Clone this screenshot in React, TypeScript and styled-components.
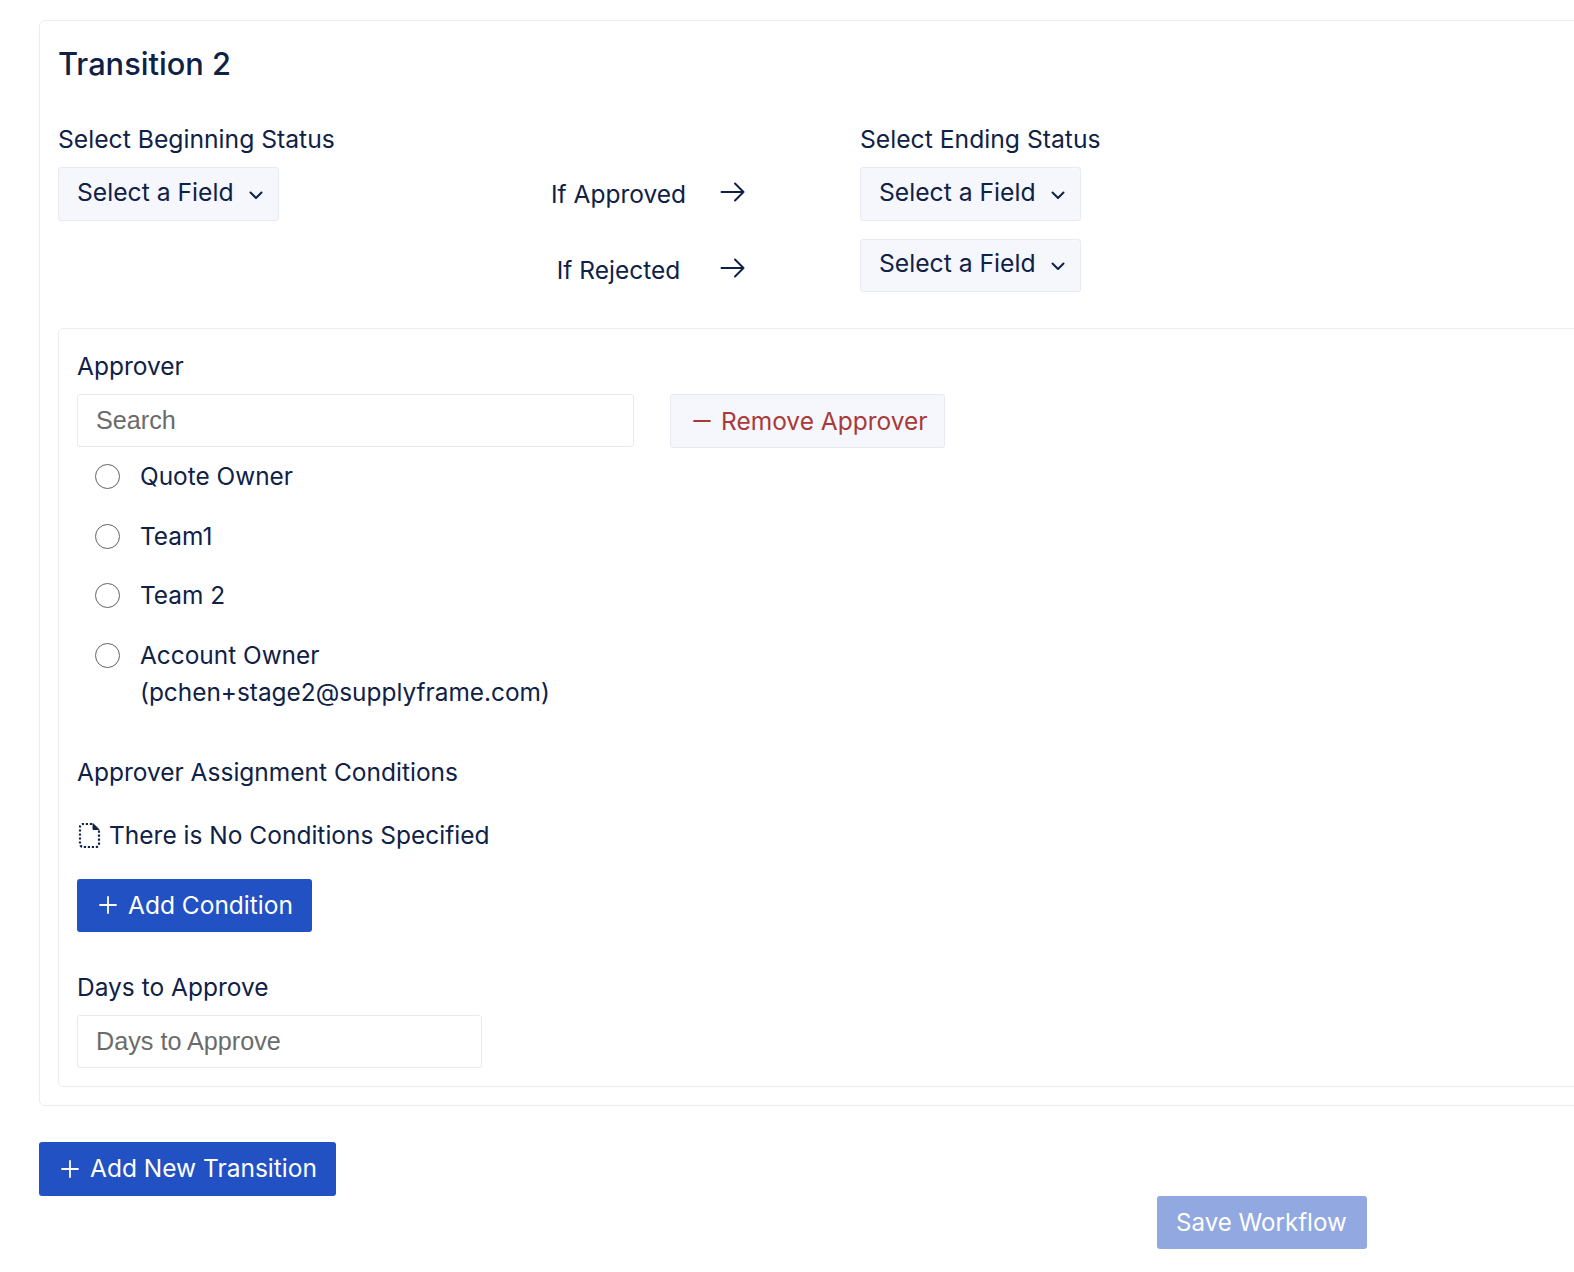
import React from "react";
import styled, { createGlobalStyle } from "styled-components";

const Global = createGlobalStyle`
  html, body { margin: 0; padding: 0; background: #fff; overflow: hidden; }
  body { font-family: Inter, "Liberation Sans", sans-serif; color: #0f2147; font-size: 24.5px; line-height: 37px; }
  * { box-sizing: border-box; }
`;

const Page = styled.div`
  width: 1574px;
  height: 1272px;
  padding: 20px 0 0 39px;
  overflow: hidden;
`;
const Card = styled.section`
  width: 1620px;
  border: 1px solid #ebecf0;
  border-radius: 6px;
  padding: 18px;
  background: #fff;
`;
const Title = styled.h2`
  margin: 0;
  font-size: 30.8px;
  line-height: 49px;
  font-weight: 500;
`;
const StatusRow = styled.div`
  display: flex;
  margin-top: 33px;
`;
const BeginColumn = styled.div`
  width: 490px;
`;
const MiddleColumn = styled.div`
  display: flex;
  flex-direction: column;
  gap: 27px;
  width: 312px;
  padding-top: 46px;
`;
const OutcomeRow = styled.div<{ $height: number }>`
  display: flex;
  align-items: center;
  height: ${(p) => p.$height}px;
`;
const OutcomeLabel = styled.span`
  width: 141px;
  text-align: center;
  margin-right: 31px;
  white-space: nowrap;
`;
const EndColumn = styled.div`
  display: flex;
  flex-direction: column;
  align-items: flex-start;
  gap: 18px;
`;
const FieldLabel = styled.label`
  display: block;
  height: 46px;
  white-space: nowrap;
`;
const StatusLabel = styled(FieldLabel)`
  font-size: 24.7px;
`;
const ApproverLabel = styled(FieldLabel)`
  padding-top: 1px;
`;
const SelectButton = styled.button`
  display: flex;
  align-items: center;
  justify-content: space-between;
  width: 221px;
  height: 53.5px;
  padding: 0 14px 3px 18px;
  background: #f5f7fc;
  border: 1px solid #e8eaf0;
  border-radius: 3px;
  font: inherit;
  font-size: 24.7px;
  color: inherit;
`;
const Panel = styled.div`
  margin-top: 36px;
  border: 1px solid #ebecf0;
  border-radius: 5px;
  padding: 18px;
`;
const ApproverRow = styled.div`
  display: flex;
  align-items: flex-start;
  gap: 36px;
  margin-top: 1px;
`;
const TextInput = styled.input<{ $width: number }>`
  display: block;
  width: ${(p) => p.$width}px;
  height: 53px;
  padding: 0 18px;
  border: 1px solid #e8eaf0;
  border-radius: 3px;
  font-family: "Liberation Sans", Arial, sans-serif;
  font-size: 25.2px;
  color: inherit;
  background: #fff;
  &::placeholder { color: #6b6b6b; opacity: 1; }
`;
const RemoveButton = styled.button`
  display: flex;
  align-items: center;
  gap: 9px;
  width: 275px;
  height: 54px;
  padding: 0 0 0 21px;
  background: #f5f7fc;
  border: 1px solid #e8eaf0;
  border-radius: 3px;
  font: inherit;
  font-size: 24.5px;
  color: #a83a3a;
  white-space: nowrap;
`;
const RadioList = styled.div`
  display: flex;
  flex-direction: column;
  gap: 22.5px;
  padding: 10px 0 0 18px;
  width: 500px;
  font-size: 24.4px;
`;
const RadioRow = styled.label`
  display: flex;
  gap: 20px;
  align-items: flex-start;
`;
const RadioMark = styled.span`
  flex: none;
  width: 25px;
  height: 25px;
  margin-top: 6px;
  border-radius: 50%;
  border: 1px solid #5f6368;
  background: #fff;
`;
const SectionLabel = styled.div`
  margin-top: 43px;
`;
const EmptyNote = styled.div`
  display: flex;
  align-items: center;
  gap: 8px;
  margin-top: 26px;
`;
const PrimaryButton = styled.button<{ $height: number }>`
  display: flex;
  align-items: center;
  gap: 10px;
  height: ${(p) => p.$height}px;
  padding: 0 19px 0 21px;
  border: none;
  border-radius: 3px;
  font: inherit;
  color: #fff;
  white-space: nowrap;
  background: #2251c4;
`;
const SaveButton = styled(PrimaryButton)`
  padding: 0 20px 0 19px;
  font-size: 24.1px;
  background: #91a8e1;
`;
const ConditionAction = styled.div`
  margin-top: 25px;
  margin-bottom: 37px;
`;
const FooterTop = styled.div`
  margin-top: 36px;
`;
const FooterSave = styled.div`
  margin-left: 1118px;
`;
const ArrowIcon = styled.svg`
  margin-bottom: 4px;
`;
const ChevronIcon = styled.svg`
  margin-top: 5px;
`;
const DocIcon = styled.svg`
  margin-left: 1px;
`;

const Chevron = () => (
  <ChevronIcon width="16" height="16" viewBox="0 0 16 16" fill="none" stroke="currentColor" strokeWidth="2" strokeLinecap="round" strokeLinejoin="round">
    <path d="M2.5 5.5 8 11l5.5-5.5" />
  </ChevronIcon>
);
const Arrow = () => (
  <ArrowIcon width="26" height="22" viewBox="0 0 26 22" fill="none" stroke="currentColor" strokeWidth="2" strokeLinecap="round" strokeLinejoin="round">
    <path d="M1.5 11h22M15 2.5l8.5 8.5-8.5 8.5" />
  </ArrowIcon>
);
const Plus = () => (
  <svg width="20" height="20" viewBox="0 0 20 20" fill="none" stroke="currentColor" strokeWidth="1.8" strokeLinecap="round">
    <path d="M10 2v16M2 10h16" />
  </svg>
);
const Minus = () => (
  <svg width="20" height="20" viewBox="0 0 20 20" fill="none" stroke="currentColor" strokeWidth="1.8" strokeLinecap="round">
    <path d="M2 10h16" />
  </svg>
);
const DashedDoc = () => (
  <DocIcon width="23" height="26" viewBox="0 0 23 26" fill="none" stroke="currentColor" strokeWidth="2.2">
    <path d="M14 2H5a3 3 0 0 0-3 3v17a3 3 0 0 0 3 3h13a3 3 0 0 0 3-3V8" strokeDasharray="2.2 1.8" />
    <path d="M15 1.5v6h6z" fill="currentColor" strokeWidth="1" />
  </DocIcon>
);

const approvers = ["Quote Owner", "Team1", "Team 2", "Account Owner (pchen+stage2@supplyframe.com)"];

export default function App() {
  return (
    <Page>
      <Global />
      <Card>
        <Title>Transition 2</Title>
        <StatusRow>
          <BeginColumn>
            <StatusLabel>Select Beginning Status</StatusLabel>
            <SelectButton>Select a Field<Chevron /></SelectButton>
          </BeginColumn>
          <MiddleColumn>
            <OutcomeRow $height={54}>
              <OutcomeLabel>If Approved</OutcomeLabel>
              <Arrow />
            </OutcomeRow>
            <OutcomeRow $height={44}>
              <OutcomeLabel>If Rejected</OutcomeLabel>
              <Arrow />
            </OutcomeRow>
          </MiddleColumn>
          <EndColumn>
            <div>
              <StatusLabel>Select Ending Status</StatusLabel>
              <SelectButton>Select a Field<Chevron /></SelectButton>
            </div>
            <SelectButton>Select a Field<Chevron /></SelectButton>
          </EndColumn>
        </StatusRow>
        <Panel>
          <ApproverLabel>Approver</ApproverLabel>
          <ApproverRow>
            <TextInput $width={557} placeholder="Search" />
            <RemoveButton><Minus />Remove Approver</RemoveButton>
          </ApproverRow>
          <RadioList>
            {approvers.map((name) => (
              <RadioRow key={name}>
                <RadioMark />
                <span>{name}</span>
              </RadioRow>
            ))}
          </RadioList>
          <SectionLabel>Approver Assignment Conditions</SectionLabel>
          <EmptyNote><DashedDoc />There is No Conditions Specified</EmptyNote>
          <ConditionAction>
            <PrimaryButton $height={53}><Plus />Add Condition</PrimaryButton>
          </ConditionAction>
          <FieldLabel>Days to Approve</FieldLabel>
          <TextInput $width={405} placeholder="Days to Approve" />
        </Panel>
      </Card>
      <FooterTop>
        <PrimaryButton $height={54}><Plus />Add New Transition</PrimaryButton>
      </FooterTop>
      <FooterSave>
        <SaveButton $height={53}>Save Workflow</SaveButton>
      </FooterSave>
    </Page>
  );
}
